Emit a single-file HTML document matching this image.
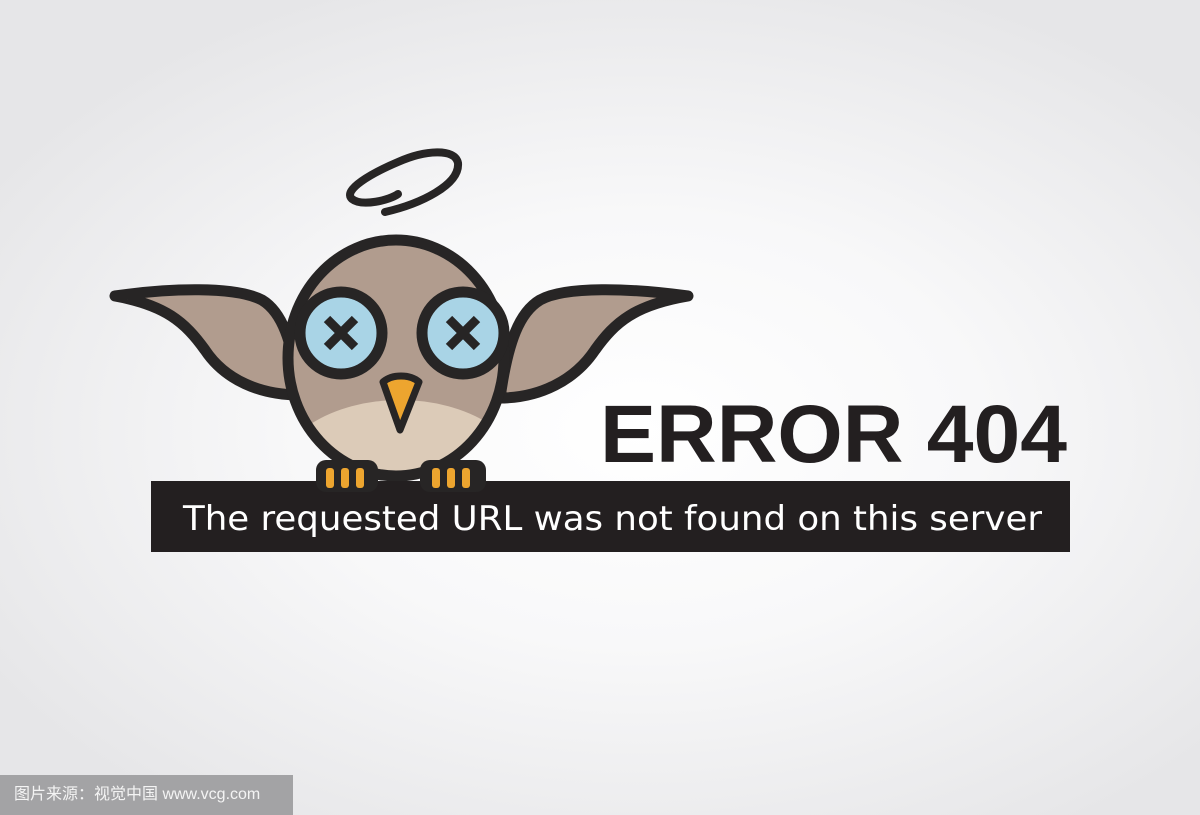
<!DOCTYPE html>
<html><head><style>
html,body{margin:0;padding:0;width:1200px;height:815px;overflow:hidden}
body{background:radial-gradient(ellipse 760px 480px at 640px 430px,#ffffff 0%,#f8f8f9 45%,#e6e6e8 100%)}
svg{position:absolute;left:0;top:0}
.cap{position:absolute;left:0;top:775px;width:293px;height:40px;background:#a3a3a5;color:#f4f4f4;font:16px "Liberation Sans","Noto Sans CJK SC",sans-serif;line-height:40px;text-indent:14px;white-space:nowrap}
</style></head><body>
<svg width="1200" height="815" viewBox="0 0 1200 815">
<!-- halo -->
<path d="M385 212 C420 204 460 185 458 163 C455 148 425 150 398 162 C372 173 342 190 352 199 C362 207 390 200 398 194" fill="none" stroke="#272525" stroke-width="8" stroke-linecap="round"/>
<!-- wings -->
<path d="M115 296 C170 288 235 286 262 300 C282 312 292 340 300 395 C260 395 225 380 205 350 C185 322 165 305 115 296 Z" fill="#b19c8e" stroke="#272525" stroke-width="11" stroke-linejoin="round"/>
<path d="M688 296 C630 288 565 286 540 300 C520 312 508 340 500 398 C540 398 575 380 595 350 C615 322 635 305 688 296 Z" fill="#b19c8e" stroke="#272525" stroke-width="11" stroke-linejoin="round"/>
<!-- body -->
<defs><clipPath id="b"><ellipse cx="396" cy="358" rx="108" ry="118"/></clipPath></defs>
<ellipse cx="396" cy="358" rx="108" ry="118" fill="#b19c8e"/>
<ellipse cx="400" cy="480" rx="125" ry="80" fill="#dccbb8" clip-path="url(#b)"/>
<ellipse cx="396" cy="358" rx="108" ry="118" fill="none" stroke="#272525" stroke-width="11"/>
<!-- eyes -->
<circle cx="341" cy="333" r="41" fill="#a9d4e6" stroke="#272525" stroke-width="11"/>
<circle cx="463" cy="333" r="41" fill="#a9d4e6" stroke="#272525" stroke-width="11"/>
<path d="M327 319 L355 347 M355 319 L327 347 M449 319 L477 347 M477 319 L449 347" stroke="#272525" stroke-width="9"/>
<!-- beak -->
<path d="M383 382 C392 374 410 374 419 382 L400 430 Z" fill="#eda52f" stroke="#272525" stroke-width="7" stroke-linejoin="round"/>
<!-- bar -->
<rect x="151" y="481" width="919" height="71" fill="#231f20"/>
<!-- feet -->
<rect x="316" y="460" width="62" height="32" rx="10" fill="#272525"/>
<rect x="420" y="460" width="66" height="32" rx="10" fill="#272525"/>
<rect x="326" y="468" width="8" height="20" rx="3" fill="#eda52f"/>
<rect x="341" y="468" width="8" height="20" rx="3" fill="#eda52f"/>
<rect x="356" y="468" width="8" height="20" rx="3" fill="#eda52f"/>
<rect x="432" y="468" width="8" height="20" rx="3" fill="#eda52f"/>
<rect x="447" y="468" width="8" height="20" rx="3" fill="#eda52f"/>
<rect x="462" y="468" width="8" height="20" rx="3" fill="#eda52f"/>
<text x="600" y="462" font-family="Liberation Sans, sans-serif" font-weight="bold" font-size="82" fill="#231f20" textLength="467" lengthAdjust="spacingAndGlyphs">ERROR 404</text>
<text x="183" y="530" font-family="DejaVu Sans, sans-serif" font-size="34" fill="#ffffff" textLength="859" lengthAdjust="spacingAndGlyphs">The requested URL was not found on this server</text>
</svg>
<div class="cap">图片来源：视觉中国 www.vcg.com</div>
</body></html>
